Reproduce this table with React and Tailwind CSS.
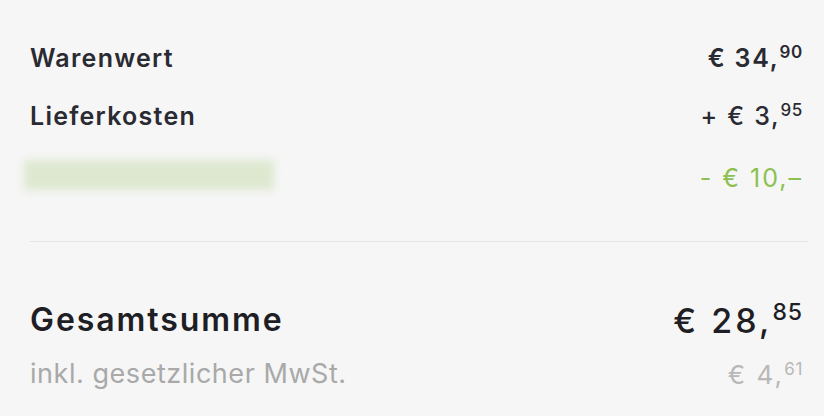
export default function App() {
  const font = { fontFamily: 'Inter, "Open Sans", sans-serif' };
  return (
    <div className="w-[824px] h-[416px] bg-[#f6f6f6] pl-[30px] pr-[21px] pt-[40px] text-[#2a2a33]" style={font}>
      <div className="flex flex-col gap-[20px]">
        <div className="flex justify-between items-center h-[38px]">
          <span className="text-[25px] font-semibold tracking-[0.05em]">Warenwert</span>
          <span className="text-[25px] font-semibold tracking-[0.07em]">€ 34,<sup className="text-[17px] top-[-9px] tracking-[0.04em]">90</sup></span>
        </div>
        <div className="flex justify-between items-center h-[38px]">
          <span className="text-[25px] font-semibold tracking-[0.05em]">Lieferkosten</span>
          <span className="text-[25px] font-medium tracking-[0.07em]">+ € 3,<sup className="text-[17px] top-[-9px] tracking-[0.04em]">95</sup></span>
        </div>
        <div className="flex justify-between items-center h-[38px]">
          <div className="w-[250px] h-[30px] ml-[-6px] bg-[#dde8cf] blur-[4px]" />
          <span className="text-[25px] pt-[8px] text-[#8cc152] tracking-[0.08em]">- € 10,–</span>
        </div>
      </div>
      <div className="h-px bg-[#e4e4e4] mt-[47px] mr-[-5px]" />
      <div className="flex justify-between items-center h-[44px] mt-[56px]">
        <span className="text-[32px] font-semibold text-[#1e1e24] tracking-[0.06em]">Gesamtsumme</span>
        <span className="text-[34px] font-medium text-[#1e1e24] tracking-[0.09em]">€ 28,<sup className="text-[23px] top-[-13px] tracking-[0.04em]">85</sup></span>
      </div>
      <div className="flex justify-between items-center h-[30px] mt-[17px]">
        <span className="text-[27px] text-[#a9a9a9] tracking-[0.02em]">inkl. gesetzlicher MwSt.</span>
        <span className="text-[26px] text-[#b8b8b8] tracking-[0.08em]">€ 4,<sup className="text-[17px] top-[-9px] tracking-[0.04em]">61</sup></span>
      </div>
    </div>
  );
}
